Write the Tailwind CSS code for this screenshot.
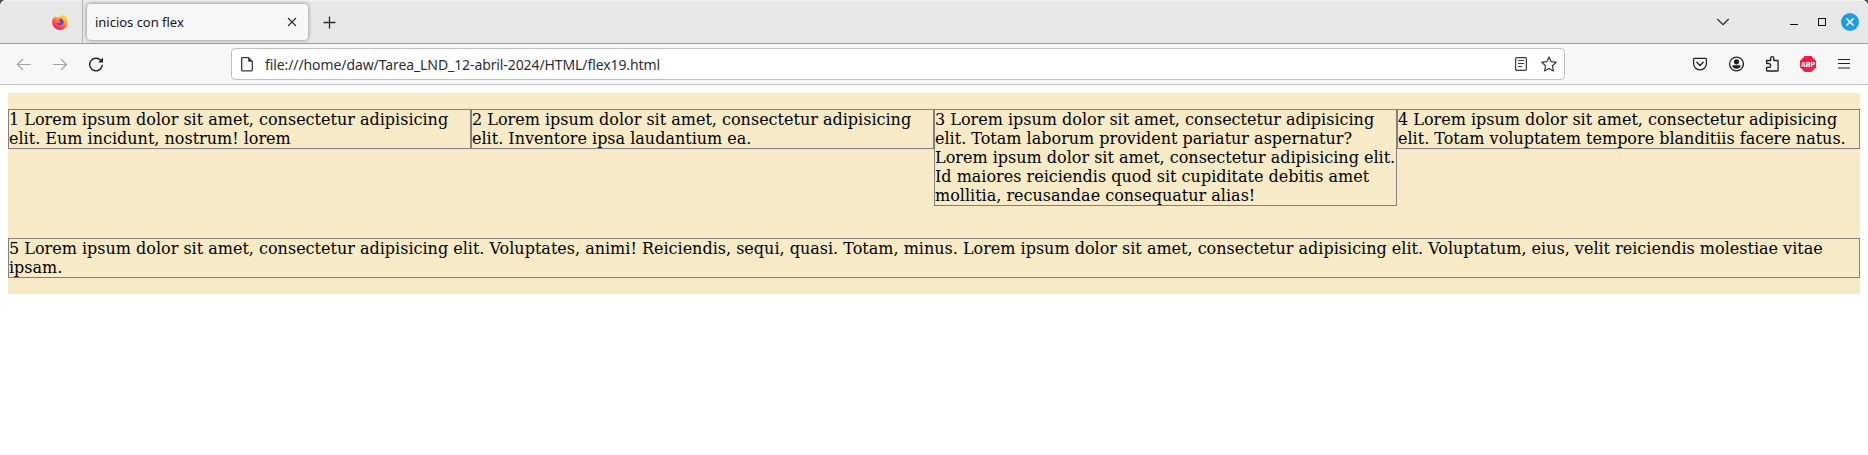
<!DOCTYPE html>
<html lang="es">
<head>
<meta charset="utf-8">
<title>inicios con flex</title>
<script src="https://cdn.jsdelivr.net/npm/@tailwindcss/browser@4"></script>
</head>
<body class="bg-[#4a4a4a]">
<div class="h-[455px] w-[1868px] overflow-hidden rounded-t-[6px] bg-white">
  <!-- Tab strip -->
  <div class="flex h-11 items-center border-b border-[#9e9e9e] bg-[#e8e8e8] font-['Noto_Sans',sans-serif] text-[#15141a] shadow-[inset_0_1px_0_#f1f1f1]">
    <div class="flex h-full w-[83px] items-center border-r border-[#b4b4b4] pl-[52px]">
      <svg class="size-4" viewBox="0 0 16 16">
        <defs>
          <linearGradient id="fx" x1=".85" y1="0" x2=".2" y2="1"><stop offset="0" stop-color="#fff04a"/><stop offset=".35" stop-color="#ffb128"/><stop offset=".65" stop-color="#ff5634"/><stop offset="1" stop-color="#f0148a"/></linearGradient>
        </defs>
        <path fill="url(#fx)" d="M9.8 0c.9.7 1.4 1.7 1.8 2.5.6-.1.8-.5.8-.9 2 1.400 3.500 3.900 3.500 6.600A7.900 7.800 0 0 1 .1 8.200c0-2 .6-3.700 1.700-4.900l.4 1.100L3.300 2l1.200 1.600 2.300-.2C8.200 2.600 9.700 1.500 9.800 0z"/>
        <path fill="#7a3cd6" d="M7.600 4.500c2.300-.2 4.100 1.100 4.100 3.300 0 2.100-1.500 3.400-3.500 3.400-1.800 0-3.300-1.100-3.500-2.700 1.100.8 2.600.7 3.500-.1-1.300 0-2.700-.5-3.200-1.500 1.400.2 1.300-.9 3-1.100z"/>
        <path fill="#ff9b2e" d="M4.500 3.600c1 .1 2 .3 2.400.6L8.200 6C7.400 6.100 6.600 6.400 6.500 7c.6.4 1.500.5 2.200.6-.6.8-1.300 1-2.300.8-1-.1-1.600-.8-1.800-1.500z"/>
      </svg>
    </div>
    <div class="ml-1 flex h-9 w-[221px] items-center justify-between rounded-[4px] bg-[#f7f7f7] pr-[11px] pl-2 shadow-[0_0_4px_rgba(0,0,0,0.45)]">
      <span class="pt-[2px] text-[13px] tracking-[-0.02px] whitespace-nowrap">inicios con flex</span>
      <svg class="size-[10px]" viewBox="0 0 10 10" fill="none" stroke="#2b2a33" stroke-width="1.1"><path d="M1 1l8 8M9 1L1 9"/></svg>
    </div>
    <svg class="mt-px ml-[15px] size-[13px]" viewBox="0 0 13 13" stroke="#2b2a33" stroke-width="1.300"><path d="M.5 6.500h12M6.500.5v12"/></svg>
    <div class="flex-1"></div>
    <svg class="mr-[60px] h-2 w-[14px]" viewBox="0 0 14 8" fill="none" stroke="#2b2a33" stroke-width="1.300"><path d="M1.300 1L7 6.700 12.700 1"/></svg>
    <div class="mt-[5px] mr-5 h-px w-2 bg-[#111]"></div>
    <div class="mr-[15px] size-2 border border-[#111]"></div>
    <svg class="mr-[9px] size-[18px]" viewBox="0 0 18 18"><circle cx="9" cy="9" r="9" fill="#1e9de0"/><path d="M5.500 5.500l7 7M12.500 5.500l-7 7" stroke="#fff" stroke-width="1.600"/></svg>
  </div>
  <!-- Navigation toolbar -->
  <div class="flex h-[41px] items-center border-b border-[#c4c4c4] bg-[#f7f7f7] font-['Noto_Sans',sans-serif]">
    <svg class="ml-4 size-4" viewBox="0 0 16 16" fill="none" stroke="#a3a3a5" stroke-width="1.200"><path d="M15 8.500H1.500M7 3L1.500 8.500 7 14"/></svg>
    <svg class="ml-5 size-4" viewBox="0 0 16 16" fill="none" stroke="#a3a3a5" stroke-width="1.200"><path d="M1 8.500h13.500M9 3l5.500 5.500L9 14"/></svg>
    <svg class="ml-5 size-4" viewBox="0 0 16 16" fill="none" stroke="#202024" stroke-width="1.400"><path d="M14.300 8.800a6.300 6.300 0 1 1-1.800-4.700l1.200 1.200"/><path d="M15 1.600V6.400h-4.800z" fill="#202024" stroke="none"/></svg>
    <div class="ml-[127px] flex h-8 w-[1334px] items-center rounded-[4px] border border-[#c0c0c0] bg-white">
      <svg class="ml-[7px] size-4" viewBox="0 0 16 16" fill="none" stroke="#3a3944" stroke-width="1.300"><path d="M3.700 1.700h5.800L13.300 5.500v8.800c0 .3-.2.500-.5.500H3.200c-.3 0-.5-.2-.5-.5V2.200c0-.3.200-.5.500-.5z"/><path d="M9.200 1.500v4.300h4.300z" fill="#3a3944" stroke="none"/></svg>
      <span class="ml-[10px] flex-1 text-[14px] tracking-[-0.095px] whitespace-nowrap text-[#2d2c35]">file:///home/daw/Tarea_LND_12-abril-2024/HTML/flex19.html</span>
      <svg class="size-4" viewBox="0 0 16 16" fill="none" stroke="#3a3944" stroke-width="1.200"><rect x="2.600" y="1.600" width="10.800" height="12.800" rx="1.300"/><path d="M5 4.500h6M5 7.500h6M5 10.500h4"/></svg>
      <svg class="mr-[7px] ml-3 size-4" viewBox="0 0 16 16" fill="none" stroke="#3a3944" stroke-width="1.200" stroke-linejoin="round"><path d="M8 .9l2.100 4.700 5.100.6-3.800 3.500 1 5.200L8 12.400l-4.400 2.500 1-5.200L.8 6.200l5.100-.6z"/></svg>
    </div>
    <div class="ml-[127px] flex items-center gap-5">
      <svg class="size-4" viewBox="0 0 16 16" fill="none" stroke="#202024" stroke-width="1.300" stroke-linecap="round"><path d="M2.500 2.300h11c.5 0 .9.400.9.900v4.200a6.400 6.400 0 0 1-12.800 0V3.200c0-.5.400-.9.900-.9z"/><path d="M4.800 6.300L8 9.500l3.200-3.200"/></svg>
      <svg class="size-4" viewBox="0 0 16 16"><circle cx="8.500" cy="8" r="6.900" fill="none" stroke="#202024" stroke-width="1.300"/><circle cx="8.500" cy="5.800" r="2.600" fill="#202024"/><path d="M4.300 9.300h8.400c0 2-1.800 3.400-4.200 3.400s-4.200-1.400-4.200-3.400z" fill="#202024"/></svg>
      <svg class="size-4" viewBox="0 0 16 16" fill="none" stroke="#202024" stroke-width="1.300" stroke-linejoin="round"><path d="M2.600 7.500V4.500h4V2.300a1.600 1.600 0 0 1 3.200 0v2.200h3.600c.4 0 .7.300.7.700v9.100c0 .4-.3.700-.7.700H3.300c-.4 0-.7-.3-.7-.7v-3h2.100a1.850 1.850 0 0 0 0-3.800z"/></svg>
      <svg class="size-4" viewBox="0 0 16 16"><path d="M4.700 0h6.600L16 4.700v6.600L11.300 16H4.700L0 11.300V4.700z" fill="#ed1e45"/><text x="1" y="11" textLength="14" lengthAdjust="spacingAndGlyphs" fill="#fff" class="font-['Roboto',sans-serif] text-[8px] font-bold">ABP</text></svg>
      <svg class="size-4" viewBox="0 0 16 16" stroke="#202024" stroke-width="1.200"><path d="M2 3.500h12M2 7.500h12M2 12h12"/></svg>
    </div>
  </div>
  <!-- Page -->
  <main class="m-2 flex flex-wrap items-start bg-[#f6eac7] font-['DejaVu_Serif',serif] text-[16px] leading-[19px] text-black">
    <div class="my-4 w-1/4 border border-[#808080]">1 Lorem ipsum dolor sit amet, consectetur adipisicing elit. Eum incidunt, nostrum! lorem</div>
    <div class="my-4 w-1/4 border border-[#808080]">2 Lorem ipsum dolor sit amet, consectetur adipisicing elit. Inventore ipsa laudantium ea.</div>
    <div class="my-4 w-1/4 border border-[#808080]">3 Lorem ipsum dolor sit amet, consectetur adipisicing elit. Totam laborum provident pariatur aspernatur? Lorem ipsum dolor sit amet, consectetur adipisicing elit. Id maiores reiciendis quod sit cupiditate debitis amet mollitia, recusandae consequatur alias!</div>
    <div class="my-4 w-1/4 border border-[#808080]">4 Lorem ipsum dolor sit amet, consectetur adipisicing elit. Totam voluptatem tempore blanditiis facere natus.</div>
    <div class="my-4 w-full border border-[#808080]">5 Lorem ipsum dolor sit amet, consectetur adipisicing elit. Voluptates, animi! Reiciendis, sequi, quasi. Totam, minus. Lorem ipsum dolor sit amet, consectetur adipisicing elit. Voluptatum, eius, velit reiciendis molestiae vitae ipsam.</div>
  </main>
</div>
</body>
</html>
